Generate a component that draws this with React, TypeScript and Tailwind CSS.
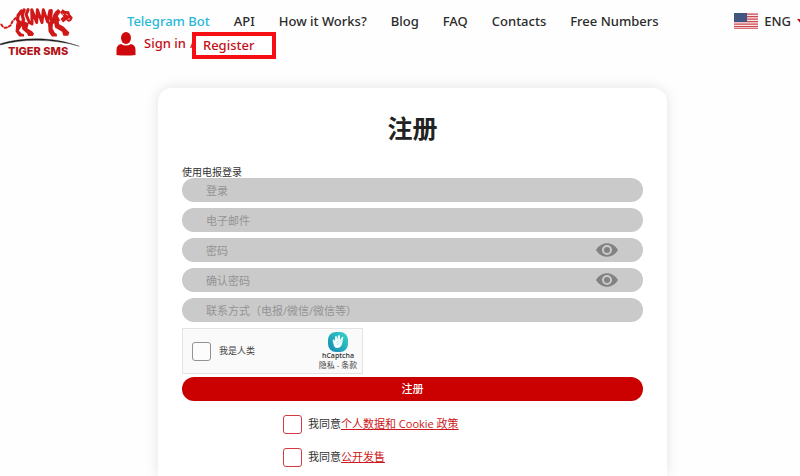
import React from "react";

const navLinks = ["API", "How it Works?", "Blog", "FAQ", "Contacts", "Free Numbers"];

function Logo() {
  return (
    <a href="#" aria-label="Tiger SMS" className="flex w-20 shrink-0 flex-col pt-2">
      <svg viewBox="0 24 240 118" className="h-[39px] w-20" fill="none" strokeLinejoin="round">
        <g stroke="#d01818" strokeLinecap="round">
          <path d="M3 74L7 80M13 84L20 83M26 80L31 76M34 70L37 64M42 59L47 54" strokeWidth="6" />
          <path d="M64 33L54 46L52 60L58 68L52 80" strokeWidth="10" />
          <path d="M72 30L66 44L70 60L66 74L72 82" strokeWidth="10" />
          <path d="M84 29L78 44L88 68L96 72L95 29L110 68L112 29L126 68L130 29L143 66L150 32" strokeWidth="9" />
          <path d="M154 32L152 54L158 68L166 44" strokeWidth="10" />
        </g>
        <g fill="#d01818">
          <path d="M49 68L64 62L63 82L56 92L64 101L71 103L72 110H57L46 95Z" />
          <path d="M66 62L86 70L82 86L96 94L102 102L98 109H84L81 101L66 88Z" />
          <path d="M144 66L160 62L158 86L165 99L171 103V110H156L146 96Z" />
          <path d="M160 58L175 56L178 73L192 81L202 91L209 98L205 108H191L187 96L166 84Z" />
          <path d="M165 36L175 27L183 35L174 48L181 62L168 68L160 52Z" />
          <path d="M181 38L188 28L196 33L208 34L211 44L219 53L215 62L207 66L199 60L190 68L182 57L191 49Z" />
        </g>
        <path d="M187 41L193 45M198 42L205 46M204 58L211 57" stroke="#fff" strokeWidth="2" />
        <path d="M0 132C68 112 160 110 239 140C160 117 68 116 0 136Z" fill="#1d1d1d" stroke="#1d1d1d" />
      </svg>
      <span className="pl-2 font-['Inter','Liberation_Sans',sans-serif] text-[11px] leading-2 font-extrabold whitespace-nowrap text-[#b31218]">
        TIGER SMS
      </span>
    </a>
  );
}

function Flag() {
  return (
    <svg viewBox="0 0 24 16" className="h-4 w-6" aria-hidden="true">
      <rect width="24" height="16" fill="#f4e8e8" />
      <path d="M0 1.2H24M0 3.7H24M0 6.2H24M0 8.7H24M0 11.2H24M0 13.7H24M0 15.8H24" stroke="#cf4851" strokeWidth="1.2" />
      <rect width="13" height="9" fill="#40547f" />
      <path d="M1 2H12M1 4.5H12M1 7H12" stroke="#5d6d92" strokeWidth=".6" strokeDasharray=".8 1.5" />
    </svg>
  );
}

function Header() {
  return (
    <header className="flex h-[62px] font-['Noto_Sans','Open_Sans',sans-serif] text-[13px] font-medium text-[#2b2b2b]">
      <Logo />
      <div className="flex-1 pl-[36px]">
        <nav className="flex h-8 items-center gap-6 pt-[10px] pl-[11px] leading-5 whitespace-nowrap">
          <a href="#" className="text-[#27b9d8]">Telegram Bot</a>
          {navLinks.map((label) => (
            <a href="#" key={label}>{label}</a>
          ))}
        </nav>
        <div className="flex h-6 items-center text-[#c50f18]">
          <svg viewBox="0 0 20 24" className="h-6 w-5" fill="#cf080d" aria-hidden="true">
            <ellipse cx="10" cy="6" rx="5" ry="6" />
            <path d="M0.500 23V18Q0.500 13 5 12Q10 15 15 12Q19.500 13 19.500 18V23Q10 24 0.500 23Z" />
          </svg>
          <a href="#" className="ml-2">Sign in</a>
          <span className="ml-1 w-[2px]">/</span>
          <a href="#" className="relative flex h-[27px] w-[84px] items-center self-start border-[4px] border-[#f50f14] bg-white pl-[7px]">Register</a>
        </div>
      </div>
      <button type="button" className="flex h-8 items-center gap-[6px] pt-[10px] leading-5">
        <Flag />
        ENG
        <span className="flex w-[3px] overflow-hidden">
          <svg viewBox="0 0 8 5" className="h-[5px] w-2 shrink-0" aria-hidden="true"><path d="M0 0H8L4 5Z" fill="#c50f18" /></svg>
        </span>
      </button>
    </header>
  );
}

function Field({ label, type = "text" }: { label: string; type?: string }) {
  return (
    <div className="flex h-6 items-center rounded-full bg-[#cacaca] pr-6 pl-6">
      <input type={type} aria-label={label} placeholder={label} className="h-6 min-w-0 flex-1 bg-transparent text-[11px] outline-none placeholder:text-[#949494]" />
      {type === "password" && (
        <button type="button" aria-label="显示密码">
          <svg viewBox="0 0 24 16" className="h-4 w-6" aria-hidden="true">
            <path fill="#828282" fillRule="evenodd" d="M1 8C6-1 18-1 23 8C18 17 6 17 1 8ZM12 3A5 5 0 1 0 12 13A5 5 0 1 0 12 3ZM12 5A3 3 0 1 1 12 11A3 3 0 1 1 12 5Z" />
          </svg>
        </button>
      )}
    </div>
  );
}

function Captcha() {
  return (
    <div className="flex h-[46px] w-[181px] items-center border border-[#e3e3e3] bg-[#fafafa] pl-[9px] text-[9px] text-[#444]">
      <label className="flex items-center gap-2">
        <input type="checkbox" className="size-[19px] appearance-none rounded-[3px] border border-[#929292] bg-[#fcfcfc]" />
        我是人类
      </label>
      <div className="mr-[5px] ml-auto flex w-[38px] flex-col items-center text-[7px] whitespace-nowrap">
        <svg viewBox="0 0 20 20" className="size-5" aria-hidden="true">
          <defs>
            <linearGradient id="captcha" x1="0" y1="1" x2="1" y2="0">
              <stop stopColor="#1686b5" />
              <stop offset="1" stopColor="#35d7c7" />
            </linearGradient>
          </defs>
          <rect width="20" height="20" rx="8" fill="url(#captcha)" />
          <path d="M5 10C4 7 6 7 7 9L7 5Q8 3 9 5V8L10 4Q11 2 12 4L12 8L14 5Q16 4 15 7L14 12C13 17 7 17 6 14Z" fill="#f2ffff" />
          <path d="M8 11L11 8M9 13L13 9" stroke="#86d6df" strokeWidth=".6" />
        </svg>
        <span className="leading-2 font-semibold text-[#333]">hCaptcha</span>
        <span className="flex gap-[2px] text-[8px] leading-[10px]">
          <a href="#">隐私</a>-<a href="#">条款</a>
        </span>
      </div>
    </div>
  );
}

function Consent({ link }: { link: string }) {
  return (
    <div className="flex h-[19px] items-center gap-[6px] text-[11px] whitespace-nowrap text-[#333]">
      <input type="checkbox" aria-label={"我同意" + link} className="size-[19px] appearance-none rounded-[3px] border border-[#d43a42] bg-white" />
      <span>我同意<a href="#" className="text-[#cc1820] underline underline-offset-1">{link}</a></span>
    </div>
  );
}

export default function App() {
  return (
    <div className="flex min-h-screen flex-col bg-[#fefefe] font-['Open_Sans','Noto_Sans_CJK_SC',sans-serif]">
      <Header />
      <main className="flex flex-1 pt-[26px] pr-[133px] pl-[158px]">
        <form onSubmit={(event) => event.preventDefault()} className="flex-1 rounded-t-[14px] bg-white px-6 pt-5 shadow-[0_0_14px_rgba(0,0,0,0.11)]">
          <h1 className="text-center text-[25px] leading-10 font-bold text-[#222]">注册</h1>
          <p className="mt-[18px] text-[10px] leading-3 text-[#333]">使用电报登录</p>
          <div className="flex flex-col gap-[6px]">
            <Field label="登录" />
            <Field label="电子邮件" />
            <Field label="密码" type="password" />
            <Field label="确认密码" type="password" />
            <Field label="联系方式（电报/微信/微信等）" />
            <Captcha />
          </div>
          <button type="submit" className="mt-[3px] h-6 w-full rounded-full bg-[#cb0000] text-[11px] font-medium text-white">注册</button>
          <div className="flex flex-col gap-[14px] pt-[14px] pl-[101px]">
            <Consent link="个人数据和 Cookie 政策" />
            <Consent link="公开发售" />
          </div>
        </form>
      </main>
    </div>
  );
}
